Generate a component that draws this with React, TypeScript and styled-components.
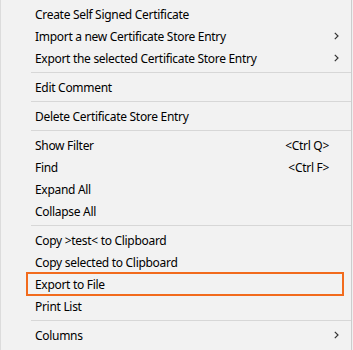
import styled, { createGlobalStyle } from "styled-components";

const GlobalStyle = createGlobalStyle`
  html, body {
    margin: 0;
    padding: 0;
    background: #f0f0f0;
  }
  body {
    font-family: "Noto Sans", "Open Sans", sans-serif;
  }
`;

type Entry =
  | { kind: "item"; label: string; shortcut?: string; submenu?: boolean; highlighted?: boolean }
  | { kind: "sep" };

const entries: Entry[] = [
  { kind: "item", label: "Create Self Signed Certificate" },
  { kind: "item", label: "Import a new Certificate Store Entry", submenu: true },
  { kind: "item", label: "Export the selected Certificate Store Entry", submenu: true },
  { kind: "sep" },
  { kind: "item", label: "Edit Comment" },
  { kind: "sep" },
  { kind: "item", label: "Delete Certificate Store Entry" },
  { kind: "sep" },
  { kind: "item", label: "Show Filter", shortcut: "<Ctrl Q>" },
  { kind: "item", label: "Find", shortcut: "<Ctrl F>" },
  { kind: "item", label: "Expand All" },
  { kind: "item", label: "Collapse All" },
  { kind: "sep" },
  { kind: "item", label: "Copy >test< to Clipboard" },
  { kind: "item", label: "Copy selected to Clipboard" },
  { kind: "item", label: "Export to File", highlighted: true },
  { kind: "item", label: "Print List" },
  { kind: "sep" },
  { kind: "item", label: "Columns", submenu: true },
];

export default function App() {
  return (
    <>
      <GlobalStyle />
      <Menu>
        {entries.map((e, i) =>
          e.kind === "sep" ? (
            <Separator key={i} />
          ) : (
            <Item key={i} $highlighted={e.highlighted}>
              <Label>{e.label}</Label>
              {e.shortcut && <Shortcut>{e.shortcut}</Shortcut>}
              <Arrow>
                {e.submenu && (
                  <svg width="5" height="8" viewBox="0 0 5 8">
                    <path d="M0.8 0.8 L4 4 L0.8 7.2" fill="none" stroke="#333" strokeWidth="1.2" />
                  </svg>
                )}
              </Arrow>
            </Item>
          )
        )}
      </Menu>
    </>
  );
}

const Menu = styled.div`
  width: 350px;
  height: 347px;
  box-sizing: content-box;
  padding-top: 3px;
  background: #f2f2f2;
  border-left: 1px solid #dcdcdc;
  border-right: 1px solid #cccccc;
  border-bottom: 1px solid #cccccc;
  display: flex;
  flex-direction: column;
`;

const Item = styled.div<{ $highlighted?: boolean }>`
  position: relative;
  height: 22px;
  display: flex;
  align-items: center;
  padding-left: 34px;
  font-size: 12px;
  letter-spacing: -0.3px;
  color: #000;

  ${({ $highlighted }) =>
    $highlighted &&
    `
    &::after {
      content: "";
      position: absolute;
      left: 25px;
      right: 7px;
      top: -1px;
      bottom: -1px;
      border: 2px solid #f26b1d;
    }
  `}
`;

const Label = styled.span`
  flex: 1;
  white-space: nowrap;
`;

const Shortcut = styled.span`
  white-space: nowrap;
`;

const Arrow = styled.span`
  width: 22px;
  box-sizing: border-box;
  padding-left: 5px;
  display: flex;
  justify-content: flex-start;
  align-items: center;
`;

const Separator = styled.div`
  height: 1px;
  margin: 3px 0 3px 30px;
  background: #d7d7d7;
`;
